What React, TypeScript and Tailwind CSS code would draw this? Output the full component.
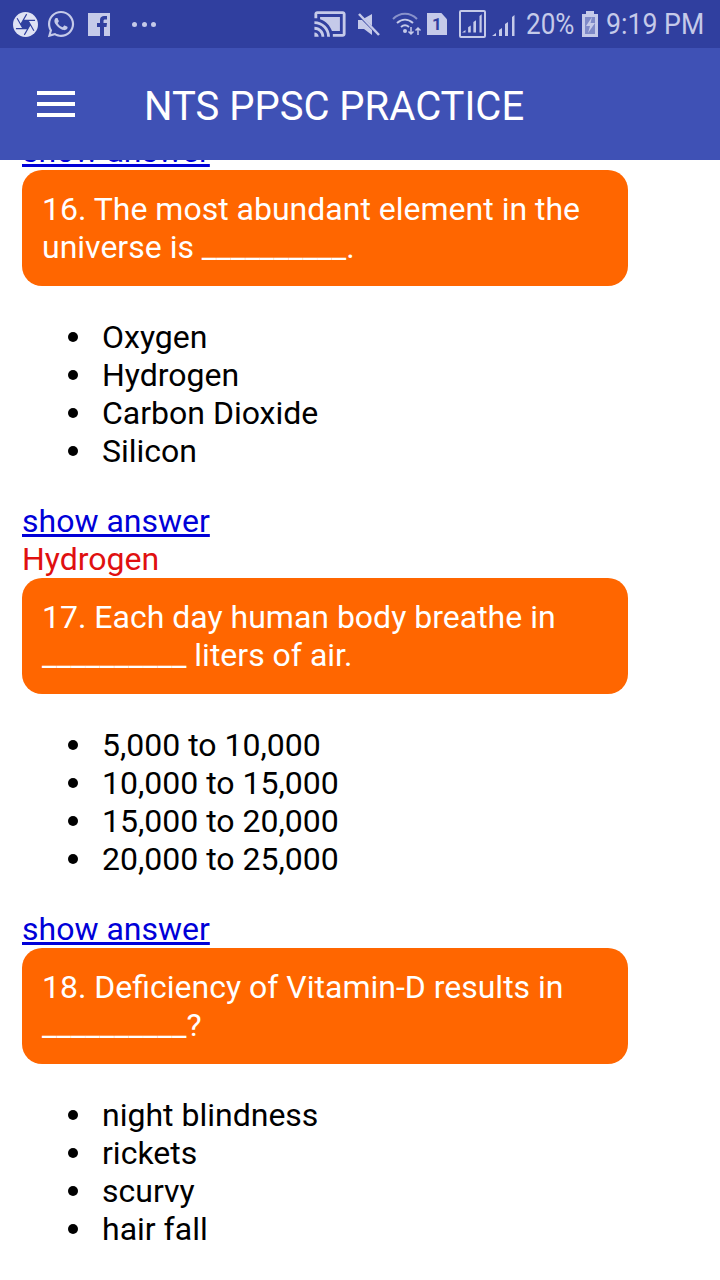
import { FaWhatsapp } from 'react-icons/fa';
import { MdCastConnected } from 'react-icons/md';

const questions = [
  {
    lines: ['16. The most abundant element in the', 'universe is __________.'],
    options: ['Oxygen', 'Hydrogen', 'Carbon Dioxide', 'Silicon'],
    answer: 'Hydrogen',
  },
  {
    lines: ['17. Each day human body breathe in', '__________ liters of air.'],
    options: ['5,000 to 10,000', '10,000 to 15,000', '15,000 to 20,000', '20,000 to 25,000'],
  },
  {
    lines: ['18. Deficiency of Vitamin-D results in', '__________?'],
    options: ['night blindness', 'rickets', 'scurvy', 'hair fall'],
  },
];

function ShowAnswer() {
  return <div className="text-[#0000d8] underline">show answer</div>;
}

function ShutterIcon() {
  return (
    <svg width="25" height="25" viewBox="0 0 24 24" fill="none" stroke="#303f9f" strokeWidth="1.100">
      <circle cx="12" cy="12" r="12" fill="#dfe2f4" stroke="none" />
      <path d="M9.690 8h4.620l2.310 4-2.310 4H9.690l-2.310-4z" fill="#303f9f" stroke="none" />
      <path d="m14.310 8 5.740 9.940M9.690 8h11.480M7.380 12l5.740-9.940M9.690 16 3.950 6.060M14.310 16H2.830M16.620 12l-5.740 9.940" />
    </svg>
  );
}

function FacebookIcon() {
  return (
    <svg width="22" height="23" viewBox="0 0 22 23" className="ml-[12px]">
      <rect width="22" height="23" fill="#c5cae9" />
      <path d="M12 23v-9H9v-4h3V7c0-3 2-4 4-4h3v3.500h-2c-1 0-1.500.5-1.500 1.500v2H19l-.5 4h-2.500v9z" fill="#303f9f" />
    </svg>
  );
}

function MuteIcon() {
  return (
    <svg width="23" height="23" viewBox="0 0 23 23" className="ml-[12px]" fill="currentColor">
      <path d="M15 1v12L7 5.500zM1 7h4l10 10v5l-8-6H1z" />
      <path d="M2 1l20 21" stroke="currentColor" strokeWidth="2.500" />
    </svg>
  );
}

function WifiIcon() {
  return (
    <svg width="30" height="26" viewBox="0 0 30 26" className="ml-[12px]" fill="none" stroke="currentColor" strokeWidth="2">
      <path d="M1 8c7-7 17-7 24 0" opacity="0.6" />
      <path d="M5 12c5-4.500 11-4.500 16 0M9 16c3-2.500 5-2.500 8 0" />
      <circle cx="13" cy="20" r="2" fill="currentColor" stroke="none" />
      <path d="M19 16v7M16.500 20.500l2.500 2.500 2.500-2.500M26 24v-7M23.500 19.500l2.500-2.500 2.500 2.500" strokeWidth="1.500" />
    </svg>
  );
}

function SignalBars() {
  return (
    <svg width="24" height="26" viewBox="0 0 24 26" fill="currentColor">
      <path d="M0 25l4-3v3zM7 25v-6l3-2v8zM13 25V13l3-2v14zM20 25V6l2.500-2v21z" />
    </svg>
  );
}

function BatteryIcon() {
  return (
    <svg width="16" height="26" viewBox="0 0 16 26" className="ml-[9px]" fill="currentColor">
      <path d="M4 0h8v3h4v23H0V3h4z" />
      <path d="M3 6h10v17H3z" fill="#7f8ac8" />
      <path d="M10 6l-6 9h4l-2 7 7-10H8.500z" />
    </svg>
  );
}

function StatusBar() {
  return (
    <div className="flex h-12 items-center justify-between bg-[#303f9f] pl-[13px] pr-[16px] text-[#c5cae9]">
      <div className="flex items-center">
        <ShutterIcon />
        <FaWhatsapp size={30} className="ml-[8px]" />
        <FacebookIcon />
        <div className="ml-[22px] flex gap-[4.500px]">
          <span className="h-[5px] w-[5px] rounded-full bg-[#c5cae9]" />
          <span className="h-[5px] w-[5px] rounded-full bg-[#c5cae9]" />
          <span className="h-[5px] w-[5px] rounded-full bg-[#c5cae9]" />
        </div>
      </div>
      <div className="flex items-center text-[30px] leading-none">
        <MdCastConnected size={34} className="-mx-[1.500px]" />
        <MuteIcon />
        <WifiIcon />
        <div className="ml-[5px] flex h-[22px] w-[20px] items-center justify-center bg-[#c5cae9] text-[17px] font-bold text-[#303f9f] [clip-path:polygon(0_0,72%_0,100%_28%,100%_100%,0_100%)]">
          1
        </div>
        <div className="ml-[12px] flex h-[28px] w-[27px] items-end justify-center overflow-hidden rounded-[2px] border-2 border-[#c5cae9] px-[1px] pb-[1px]">
          <SignalBars />
        </div>
        <div className="ml-[6px]">
          <SignalBars />
        </div>
        <span className="ml-[10px] w-[47px] origin-left scale-x-[0.87] whitespace-nowrap">20%</span>
        <BatteryIcon />
        <span className="ml-[8px] w-[98px] origin-left scale-x-[0.89] whitespace-nowrap">9:19 PM</span>
      </div>
    </div>
  );
}

function AppBar() {
  return (
    <div className="flex h-[112px] items-center bg-[#3f51b5] text-white">
      <div className="ml-[37px] flex w-[38px] flex-col gap-[7px]">
        <span className="h-[4px] bg-white" />
        <span className="h-[4px] bg-white" />
        <span className="h-[4px] bg-white" />
      </div>
      <div className="ml-[69px] mt-[6px] text-[40px] leading-none">NTS PPSC PRACTICE</div>
    </div>
  );
}

export default function App() {
  return (
    <div className="h-[1280px] w-[720px] overflow-hidden bg-white font-['Roboto',sans-serif]">
      <StatusBar />
      <AppBar />
      <div className="h-[1120px] overflow-hidden pl-[22px] text-[32px] leading-[38px] text-black">
        <div className="-mt-[28px]">
          <ShowAnswer />
        </div>
        {questions.map(q => (
          <div key={q.lines[0]}>
            <div className="w-[606px] rounded-[20px] bg-[#ff6600] p-[20px] text-white">
              {q.lines.map(line => (
                <div key={line}>{line}</div>
              ))}
            </div>
            <ul className="my-[32px] pl-[80px]">
              {q.options.map(option => (
                <li key={option} className="flex items-center">
                  <span className="-ml-[34px] mr-[24px] h-[10px] w-[10px] rounded-full bg-black" />
                  {option}
                </li>
              ))}
            </ul>
            <ShowAnswer />
            {q.answer && <div className="text-[#e01010]">{q.answer}</div>}
          </div>
        ))}
      </div>
    </div>
  );
}
